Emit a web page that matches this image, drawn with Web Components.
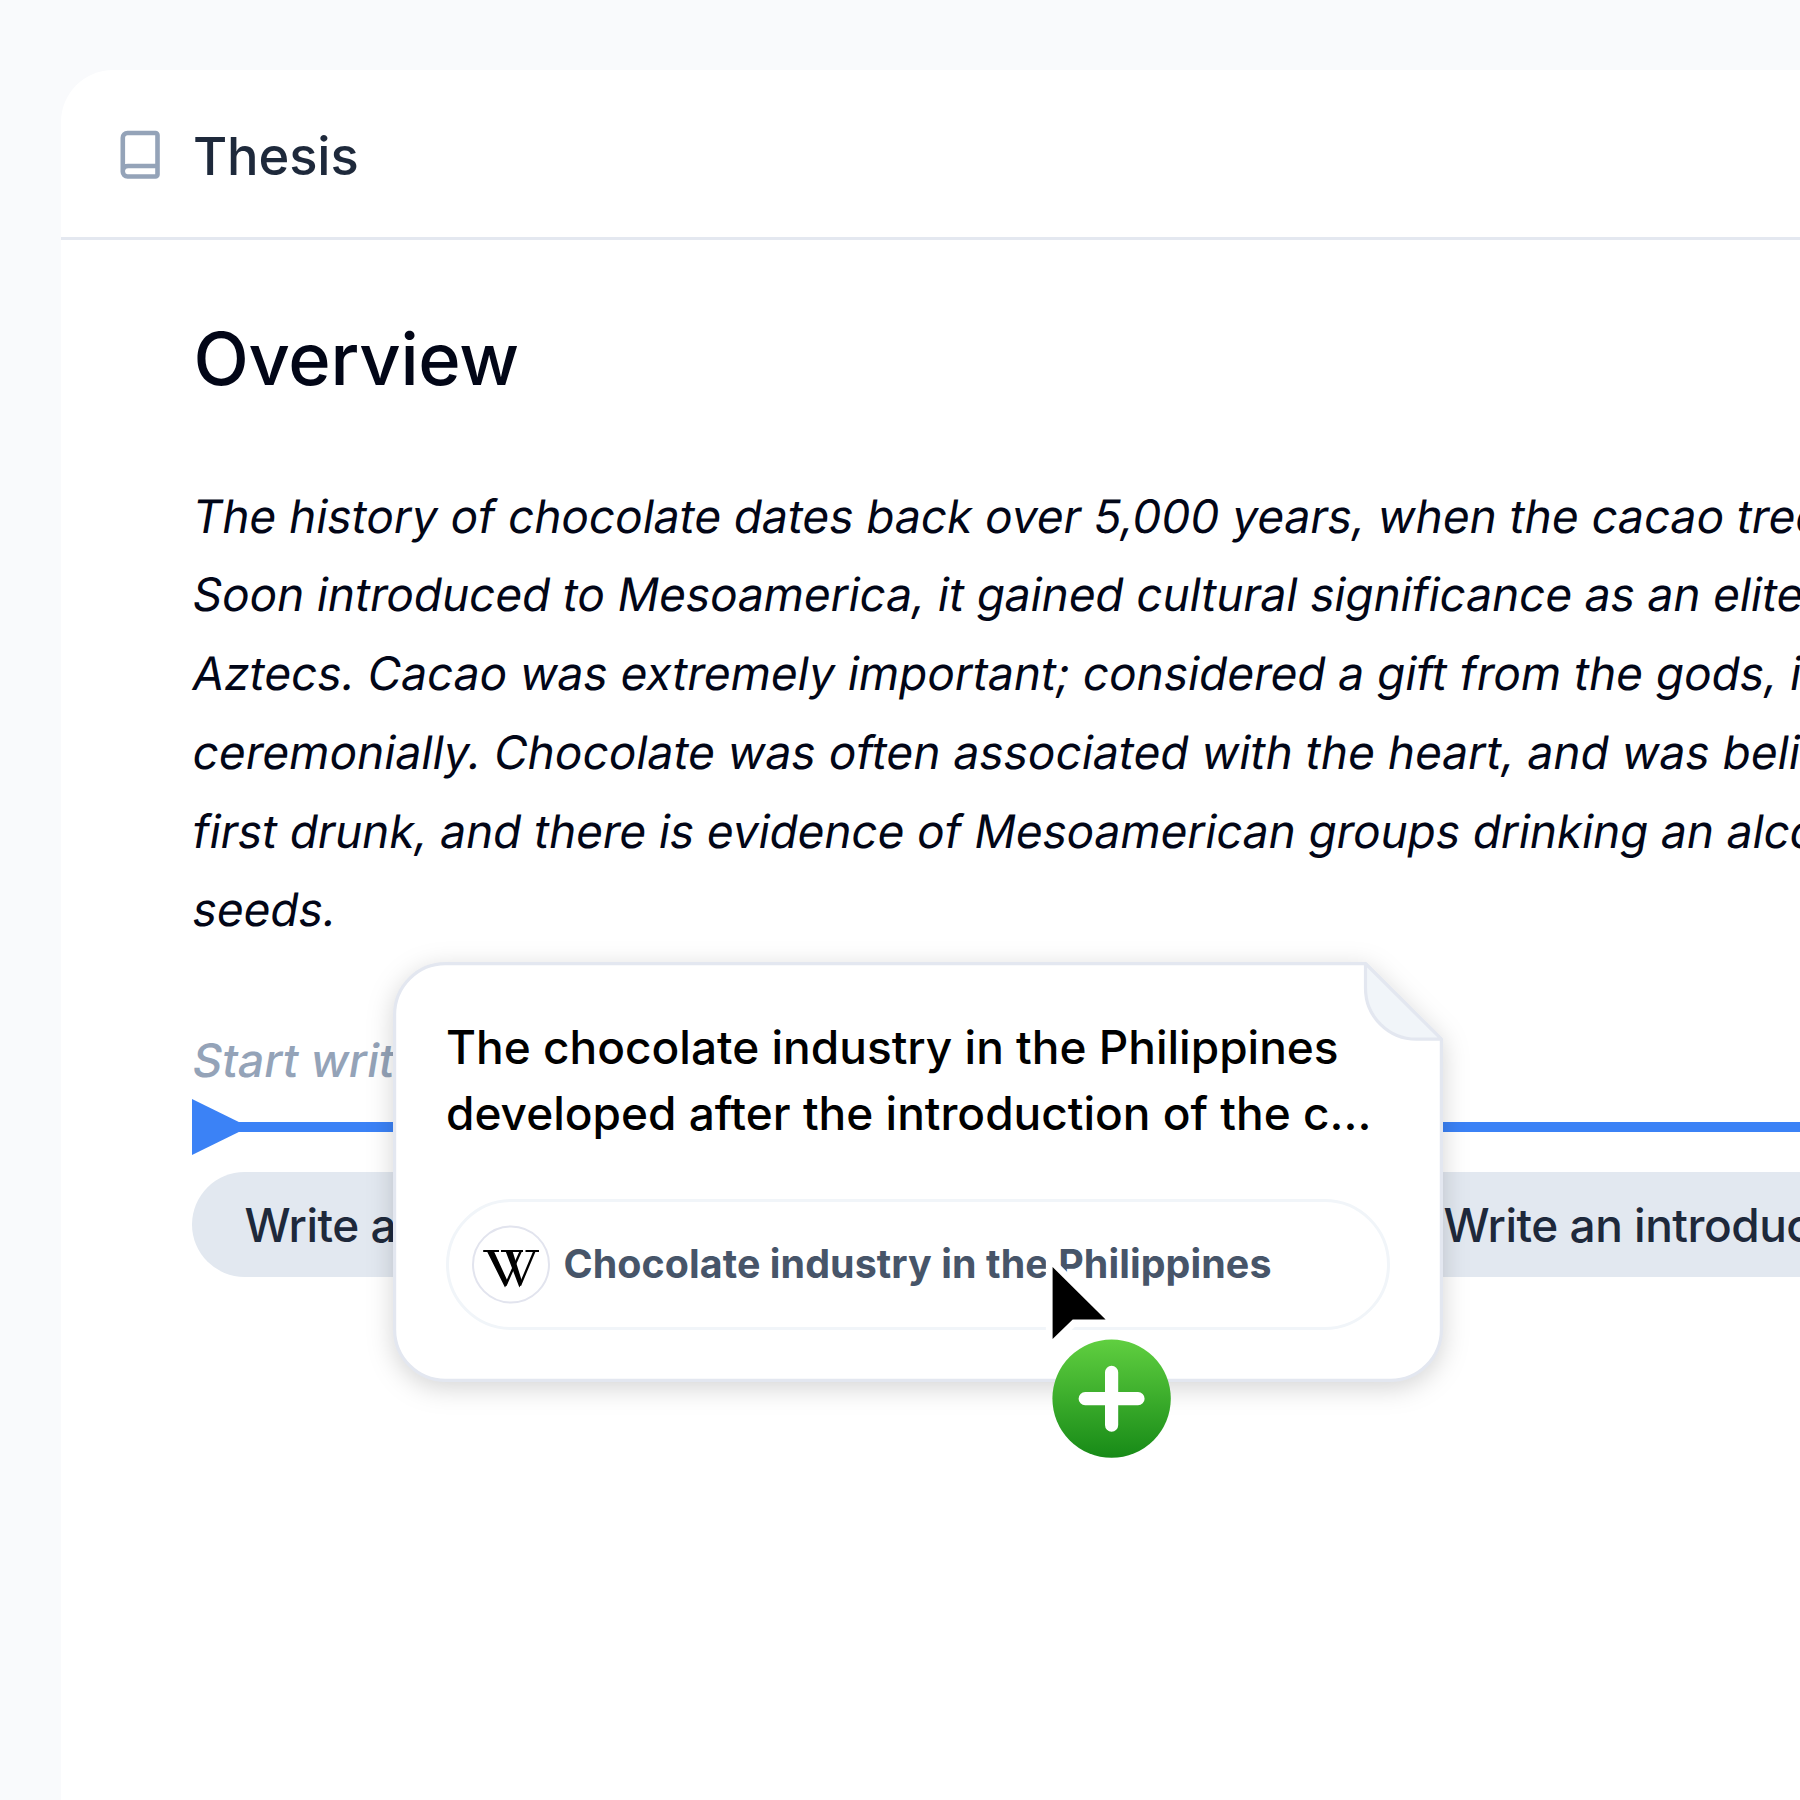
<!DOCTYPE html>
<html lang="en">
<head>
<meta charset="utf-8">
<title>Thesis</title>
<style>
html,body{margin:0;width:1800px;height:1800px;overflow:hidden;background:#f9fafc;font-family:Inter,"Liberation Sans",sans-serif;font-variant-ligatures:none}
</style>
</head>
<body>
<thesis-app></thesis-app>
<script>
const define = (name, html) => customElements.define(name, class extends HTMLElement {
  constructor() {
    super();
    this.attachShadow({ mode: 'open' }).innerHTML = html;
  }
});

define('book-icon', `<style>:host{display:block;width:42px;height:52px}svg{display:block}</style>
<svg width="42" height="52" viewBox="0 0 42 52" fill="none" stroke="#94a3b8" stroke-width="4.6" stroke-linejoin="round"><path d="M7.5 4H35.5A2 2 0 0 1 37.5 6V45.5A2 2 0 0 1 35.5 47.5H7.5A4.7 4.7 0 0 1 2.8 42.8V8.7A4.7 4.7 0 0 1 7.5 4ZM2.8 41C3.4 38 5 37 8 37H37.2"/></svg>`);

define('doc-header', `<style>
:host{display:flex;align-items:center;box-sizing:border-box;height:170px;padding:3px 59px 0;border-bottom:3px solid #e4e8f0;gap:31px}
span{padding-top:2px;font-size:52.5px;letter-spacing:-.15px;line-height:64px;font-weight:500;color:#1e293b;white-space:nowrap}
</style><book-icon></book-icon><span><slot></slot></span>`);

/* One line of slanted text, sheared around its own mid-height. */
define('slant-line', `<style>
:host{display:block;width:max-content;height:78.8px;font-size:46px;line-height:78.8px;white-space:pre;transform:skewX(-9.4deg);transform-origin:0 41px}
</style><slot></slot>`);

define('prompt-chip', `<style>
:host{display:flex;align-items:center;flex:none;box-sizing:border-box;height:105px;padding:0 52.5px;border-radius:53px;background:#e2e8f0;color:#1e293b;font-size:46px;font-weight:500;letter-spacing:-.5px;line-height:66px;white-space:nowrap}
</style><slot></slot>`);

define('drop-line', `<style>:host{display:flex;align-items:center;height:57px}
i{width:0;height:0;border:solid transparent;border-width:28.3px 0 28.3px 57px;border-left-color:#3b82f6}
b{flex:1;height:10px;margin-left:-10px;background:#3b82f6}</style><i></i><b></b>`);

define('wiki-badge', `<style>:host{display:block;flex:none;width:78px;height:79px}svg{display:block}</style>
<svg width="78" height="79" viewBox="0 0 78 79"><circle cx="39" cy="39.5" r="38" fill="#fff" stroke="#e2e4ee" stroke-width="2"/>
<path d="M14.8 26H21.8L36 57L33 62.4ZM33.5 26H40.5L50.2 57L47.4 62.4Z"/>
<g fill="none" stroke="#000"><path stroke-width="1.8" d="M11.2 26H27M29 26H51M53.5 26H67"/><path stroke-width="2.3" d="M33.5 60.5L48.6 26.5M48 60.5L62.3 26.5"/></g></svg>`);

define('source-pill', `<style>
:host{display:flex;align-items:center;box-sizing:border-box;height:131px;padding:0 23px;border:3px solid #f1f5f9;border-radius:66px;gap:13.5px}
span{padding-bottom:2px;font-size:39.4px;line-height:52px;font-weight:700;letter-spacing:.08px;color:#475569;white-space:nowrap}
</style><wiki-badge></wiki-badge><span><slot></slot></span>`);

define('note-card', `<style>
:host{display:grid;width:1050px;height:420px}
svg,.in{grid-area:1/1}
svg{display:block;overflow:visible;filter:drop-shadow(0 6.5px 13px rgba(0,0,0,.17))}
.in{position:relative;display:flex;flex-direction:column;justify-content:space-between;box-sizing:border-box;padding:53px 53px 52px}
.t{font-size:46px;font-weight:500;line-height:65.7px;color:#000;white-space:pre}
</style>
<svg width="1050" height="420" viewBox="0 0 1050 420" stroke-width="3.2" stroke="#e3e7f0" stroke-linejoin="round"><path fill="#fff" d="M53 1.6H972.5L1048.4 77.5V367A51 51 0 0 1 997 418.4H53A51 51 0 0 1 1.6 367V53A51 51 0 0 1 53 1.6Z"/><path fill="#f1f5f9" d="M972.5 1.6V26A51 51 0 0 0 1024 77.2H1048.4Z"/></svg>
<div class="in"><div class="t"><slot></slot></div><slot name="source"></slot></div>`);

define('copy-cursor', `<style>:host{display:block}svg{display:block;overflow:visible}</style>
<svg width="140" height="220" viewBox="1040 1250 140 220"><defs><linearGradient id="g" x1="0" y1="0" x2="0" y2="1"><stop offset="0" stop-color="#60cf40"/><stop offset="1" stop-color="#178a17"/></linearGradient></defs>
<path d="M1052.6 1267V1339L1072.7 1319.6H1105.6Z" fill="#000" stroke="#fff" stroke-width="13.5" paint-order="stroke"/>
<circle cx="1111.6" cy="1398.6" r="59.2" fill="url(#g)"/>
<path d="M1085.2 1398.7H1138M1111.6 1372.3V1425.1" stroke="#fff" stroke-width="13.2" stroke-linecap="round"/></svg>`);

define('thesis-app', `<style>
:host{display:block;position:relative;width:1800px;height:1800px;overflow:hidden}
main{box-sizing:border-box;width:1900px;height:1800px;margin:70px 0 0 61px;background:#fff;border-radius:52px 0 0 0}
.body{padding:75px 0 0 131px}
h1{margin:0;padding-left:1.5px;font-size:72.2px;letter-spacing:-.3px;line-height:88px;font-weight:500;color:#020617}
.para{margin:73.5px 0 0 .8px;color:#020617;letter-spacing:-.03px}
.tight{letter-spacing:-.1px}
.loose{letter-spacing:.03px}
.ph{margin:71.7px 0 0 .8px;font-weight:500;color:#94a3b8}
drop-line{margin-top:-1.5px}
.chips{display:flex;gap:26px;margin-top:17px}
.first{width:1173px}
note-card{position:absolute;left:393px;top:962px}
copy-cursor{position:absolute;z-index:2;left:1040px;top:1250px}
</style>
<main><doc-header>Thesis</doc-header>
<div class="body"><h1>Overview</h1>
<div class="para">
<slant-line>The history of chocolate dates back over 5,000 years, when the cacao tree</slant-line>
<slant-line class="tight">Soon introduced to Mesoamerica, it gained cultural significance as an elite</slant-line>
<slant-line>Aztecs. Cacao was extremely important; considered a gift from the gods, i</slant-line>
<slant-line class="loose">ceremonially. Chocolate was often associated with the heart, and was beli</slant-line>
<slant-line class="tight">first drunk, and there is evidence of Mesoamerican groups drinking an alco</slant-line>
<slant-line>seeds.</slant-line>
</div>
<slant-line class="ph">Start writ</slant-line>
<drop-line></drop-line>
<div class="chips"><prompt-chip class="first">Write a</prompt-chip><prompt-chip>Write an introduc</prompt-chip></div>
</div></main>
<note-card>The chocolate industry in the Philippines
developed after the introduction of the c...<source-pill slot="source">Chocolate industry in the Philippines</source-pill></note-card>
<copy-cursor></copy-cursor>`);
</script>
</body>
</html>
